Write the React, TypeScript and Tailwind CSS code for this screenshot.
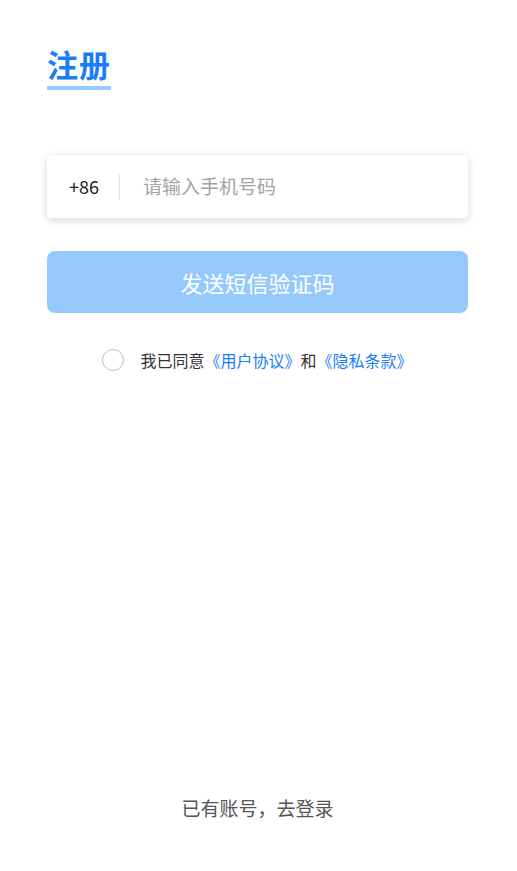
import React from 'react';

const font = { fontFamily: '"Noto Sans CJK SC", "Noto Sans", sans-serif' };

export default function App(): JSX.Element {
  const [agreed, setAgreed] = React.useState(false);
  const [phone, setPhone] = React.useState('');
  return (
    <div className="min-h-[871px] w-full bg-white flex flex-col pl-[47px] pr-[49px]" style={font}>
      <div className="pt-[44px]">
        <div className="inline-flex flex-col">
          <div className="text-[31px] leading-[40px] font-bold text-[#1a7cf8] tracking-[1px]">注册</div>
          <div className="mt-[2px] h-[4px] bg-[#96c9fb] rounded-[1px]" />
        </div>
      </div>

      <div className="mt-[65px] h-[63px] bg-white rounded-[4px] shadow-[0_2px_8px_rgba(0,0,0,0.16)] flex items-center">
        <div className="pl-[22px] pr-[20px] text-[18px] text-[#222]">+86</div>
        <div className="w-px h-[26px] bg-[#e2e2e2]" />
        <input
          className="flex-1 ml-[23px] text-[19px] text-[#222] placeholder:text-[#a3a3a3] outline-none bg-transparent"
          placeholder="请输入手机号码"
          value={phone}
          onChange={(e) => setPhone(e.target.value)}
        />
      </div>

      <button className="mt-[33px] h-[62px] w-full rounded-[8px] bg-[#95c9fc] text-white text-[22px]">
        发送短信验证码
      </button>

      <div className="mt-[35px] flex items-center justify-center text-[16px]">
        <button
          className="w-[22px] h-[22px] rounded-full border border-[#bdbdbd] mr-[16px]"
          onClick={() => setAgreed(!agreed)}
        >
          {agreed && <span className="block m-auto w-[12px] h-[12px] rounded-full bg-[#1a7cf8]" />}
        </button>
        <span className="text-[#333]">我已同意</span>
        <span className="text-[#1a7cf8]">《用户协议》</span>
        <span className="text-[#333]">和</span>
        <span className="text-[#1a7cf8]">《隐私条款》</span>
      </div>

      <div className="flex-1" />
      <div className="pb-[49px] text-center text-[19px] text-[#555]">已有账号，去登录</div>
    </div>
  );
}
